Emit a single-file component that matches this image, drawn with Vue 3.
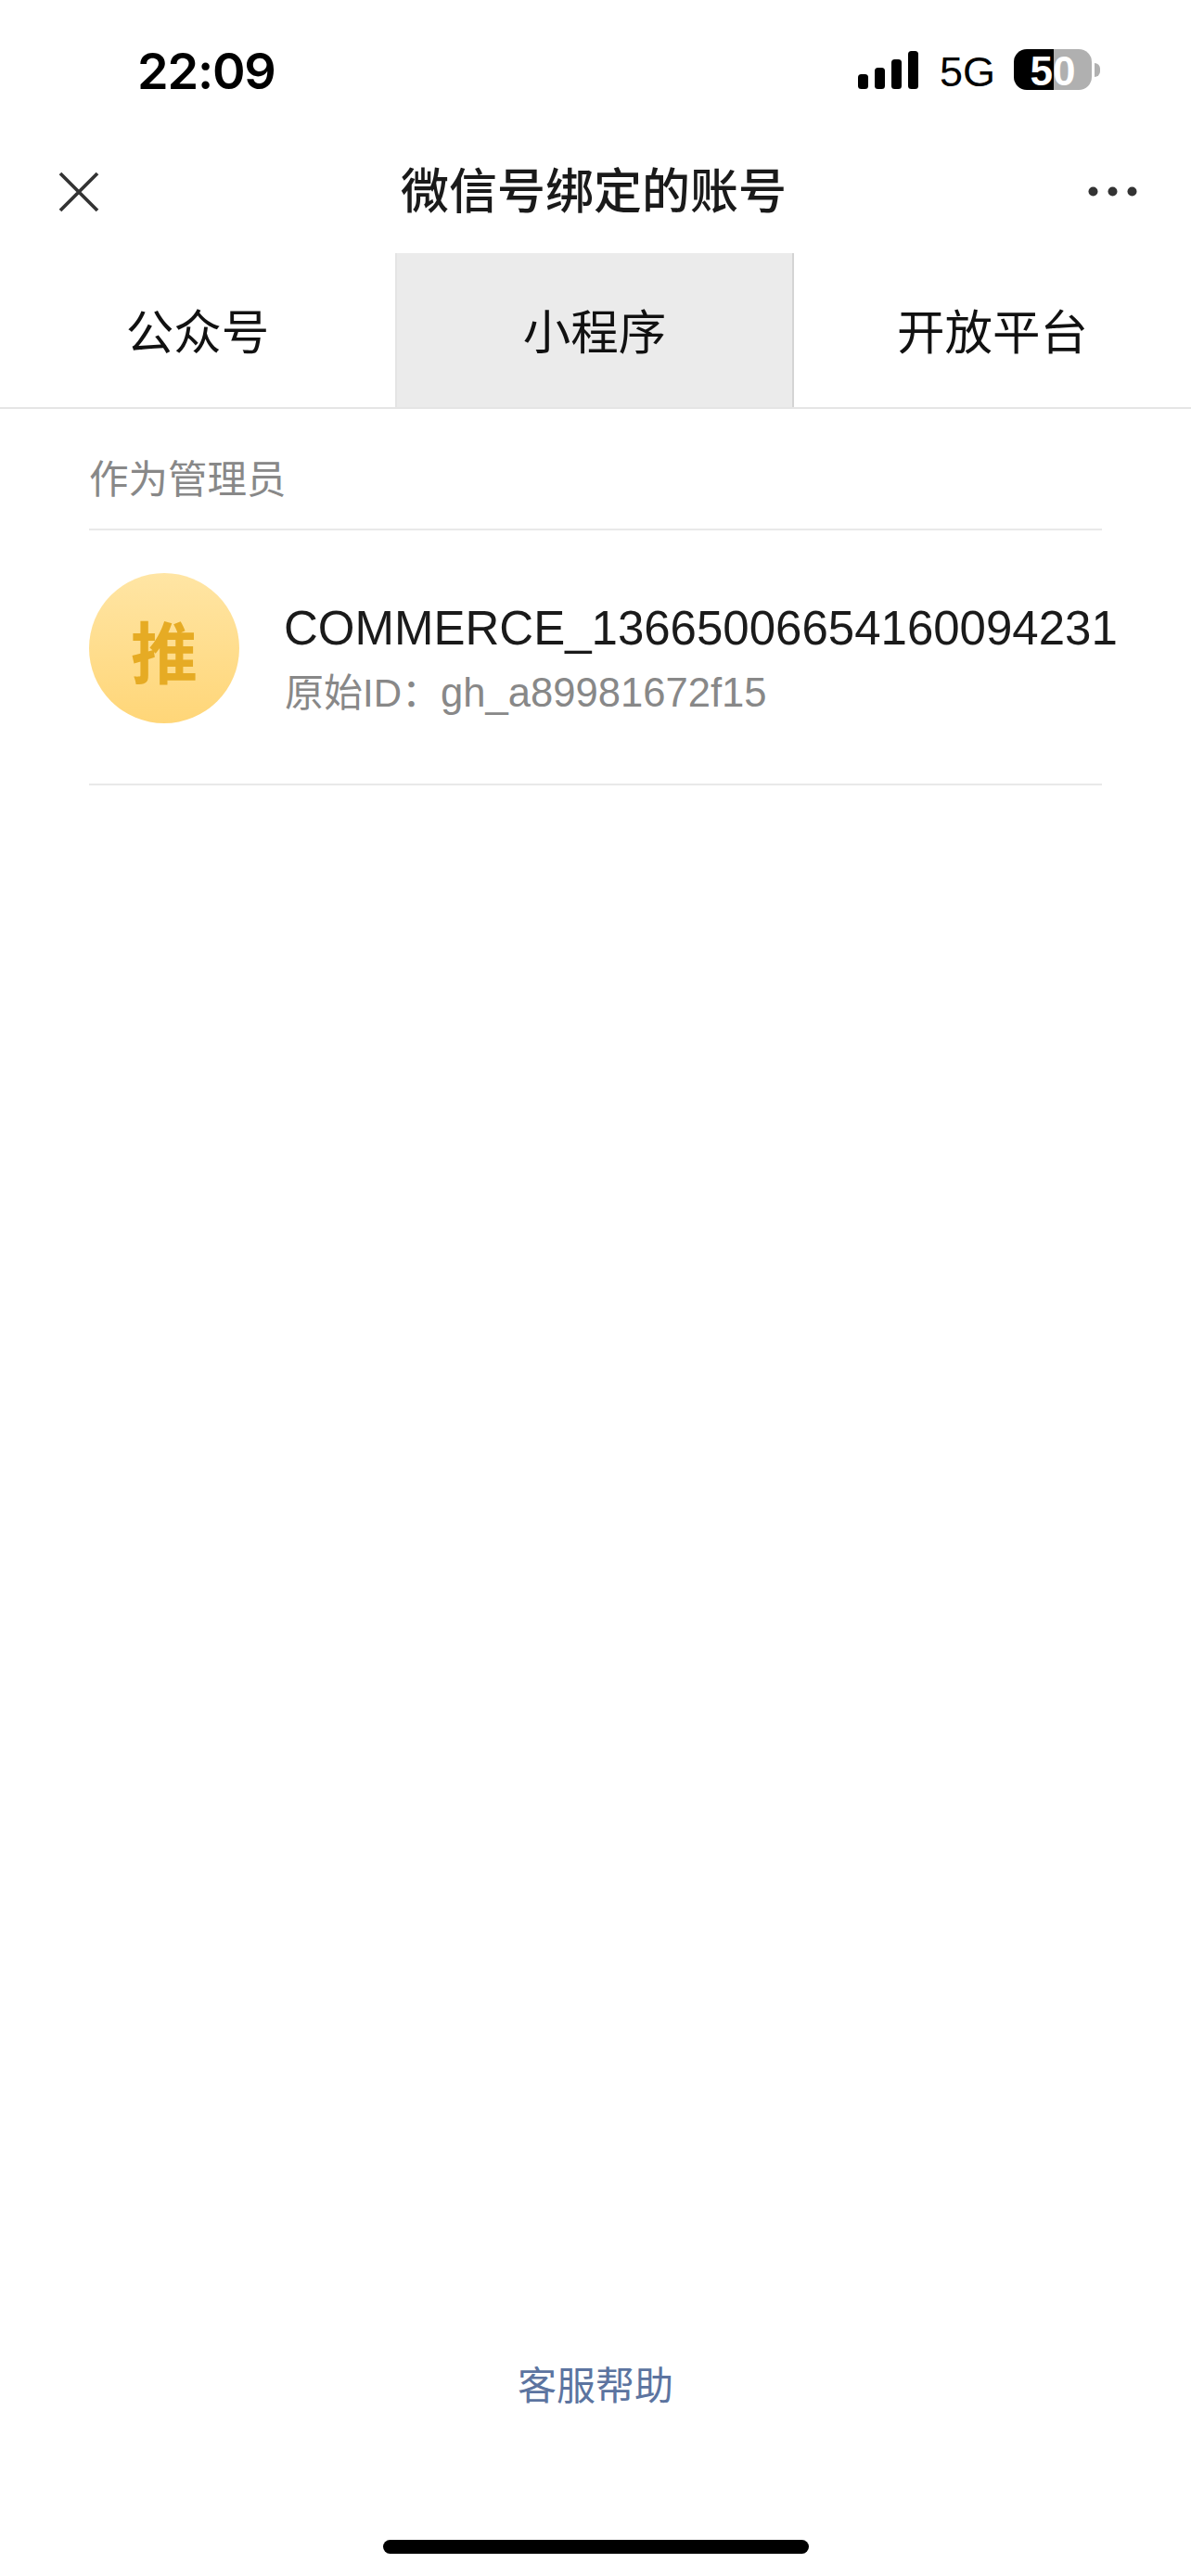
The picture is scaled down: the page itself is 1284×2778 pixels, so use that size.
<script setup>
const tabs = [
  { id: "mp", label: "公众号" },
  { id: "mini", label: "小程序", active: true },
  { id: "open", label: "开放平台" },
];
</script>

<template>
  <div class="page">
    <div class="status">
      <span class="time">22:09</span>
      <div class="status-right">
        <div class="signal">
          <i class="bar b1"></i>
          <i class="bar b2"></i>
          <i class="bar b3"></i>
          <i class="bar b4"></i>
        </div>
        <span class="net">5G</span>
        <div class="battery">50</div>
      </div>
    </div>

    <div class="nav">
      <svg class="close" width="44" height="44" viewBox="0 0 44 44">
        <path d="M2 2 L42 42 M42 2 L2 42" stroke="#333" stroke-width="3.8" fill="none" />
      </svg>
      <h1 class="title">微信号绑定的账号</h1>
      <svg class="more" width="54" height="11" viewBox="0 0 54 11">
        <circle cx="5.5" cy="5.5" r="5" fill="#333" />
        <circle cx="26.5" cy="5.5" r="5" fill="#333" />
        <circle cx="47.5" cy="5.5" r="5" fill="#333" />
      </svg>
    </div>

    <div class="tabs">
      <div v-for="tab in tabs" :key="tab.id" class="tab" :class="{ active: tab.active }">
        {{ tab.label }}
      </div>
    </div>

    <div class="content">
      <div class="section-label">作为管理员</div>
      <div class="account">
        <div class="avatar">推</div>
        <div class="info">
          <div class="name">COMMERCE_13665006654160094231</div>
          <div class="sub"><span class="sub-key">原始ID：</span>gh_a89981672f15</div>
        </div>
      </div>
    </div>

    <div class="help">客服帮助</div>
    <div class="home-bar"></div>
  </div>
</template>

<style scoped>
.page {
  min-height: 2778px;
  display: flex;
  flex-direction: column;
  box-sizing: border-box;
  padding-bottom: 24px;
  background: #fff;
  font-family: "Liberation Sans", "Noto Sans CJK SC", sans-serif;
  overflow: hidden;
}

.status {
  height: 100px;
  box-sizing: border-box;
  padding: 53px 107px 0 148px;
  display: flex;
  justify-content: space-between;
  align-items: flex-start;
  color: #000;
}

.time {
  font-family: Inter, "Liberation Sans", sans-serif;
  font-size: 54px;
  line-height: 48px;
  font-weight: 600;
  letter-spacing: -1.2px;
}

.status-right {
  display: flex;
  align-items: center;
  height: 44px;
}

.signal {
  display: flex;
  align-items: flex-end;
  gap: 7px;
  height: 41px;
  margin-right: 23px;
}

.bar {
  display: block;
  width: 11px;
  background: #000;
  border-radius: 3.5px;
}

.b1 { height: 16px; }
.b2 { height: 23px; }
.b3 { height: 32px; }
.b4 { height: 41px; }

.net {
  padding-top: 6px;
  font-size: 45px;
  line-height: 44px;
  width: 80px;
}

.battery {
  position: relative;
  width: 84px;
  height: 44px;
  border-radius: 14px;
  background: linear-gradient(90deg, #000 51%, #b0b0b0 51%);
  color: #fff;
  font-size: 44px;
  font-weight: 700;
  line-height: 47px;
  text-align: center;
}

.battery::after {
  content: "";
  position: absolute;
  left: 87px;
  top: 15px;
  width: 6px;
  height: 15px;
  background: #b0b0b0;
  border-radius: 0 8px 8px 0;
}

.nav {
  height: 173px;
  box-sizing: border-box;
  padding: 40px 57px 0 63px;
  display: flex;
  align-items: center;
}

.close,
.more {
  flex: none;
}

.title {
  flex: 1;
  margin: 0;
  text-align: center;
  font-size: 52px;
  line-height: 60px;
  font-weight: 500;
  color: #1a1a1a;
}

.tabs {
  display: grid;
  grid-template-columns: 426px 430px 428px;
  height: 168px;
  box-sizing: border-box;
  border-bottom: 2px solid #e5e5e5;
}

.tab {
  display: flex;
  align-items: center;
  justify-content: center;
  box-sizing: border-box;
  padding-bottom: 3px;
  font-size: 51.5px;
  color: #111;
}

.tab.active {
  background: #ebebeb;
  border-left: 2px solid #e4e4e4;
  border-right: 2px solid #d4d4d4;
}

.content {
  padding: 0 96px;
}

.section-label {
  height: 131px;
  box-sizing: border-box;
  padding: 20px 0 4px;
  display: flex;
  align-items: center;
  border-bottom: 2px solid #e9e9e9;
  font-size: 42.5px;
  color: #888;
}

.account {
  height: 275px;
  box-sizing: border-box;
  padding-top: 46px;
  display: flex;
  align-items: flex-start;
  gap: 49px;
  border-bottom: 2px solid #e9e9e9;
}

.avatar {
  flex: none;
  width: 162px;
  height: 162px;
  border-radius: 50%;
  background: linear-gradient(180deg, #ffe5a4, #ffd678);
  color: #e6ab24;
  font-size: 72px;
  font-weight: 700;
  display: flex;
  align-items: center;
  justify-content: center;
}

.info {
  margin-top: 25px;
  white-space: nowrap;
}

.name {
  margin-left: -1px;
  font-size: 51px;
  line-height: 69px;
  color: #1a1a1a;
}

.sub {
  font-size: 43.6px;
  line-height: 70px;
  color: #888;
}

.sub-key {
  font-size: 42px;
}

.help {
  margin-top: auto;
  margin-bottom: 135px;
  text-align: center;
  font-size: 42px;
  line-height: 60px;
  color: #5c74a0;
}

.home-bar {
  align-self: center;
  width: 459px;
  height: 15px;
  border-radius: 8px;
  background: #000;
}
</style>
